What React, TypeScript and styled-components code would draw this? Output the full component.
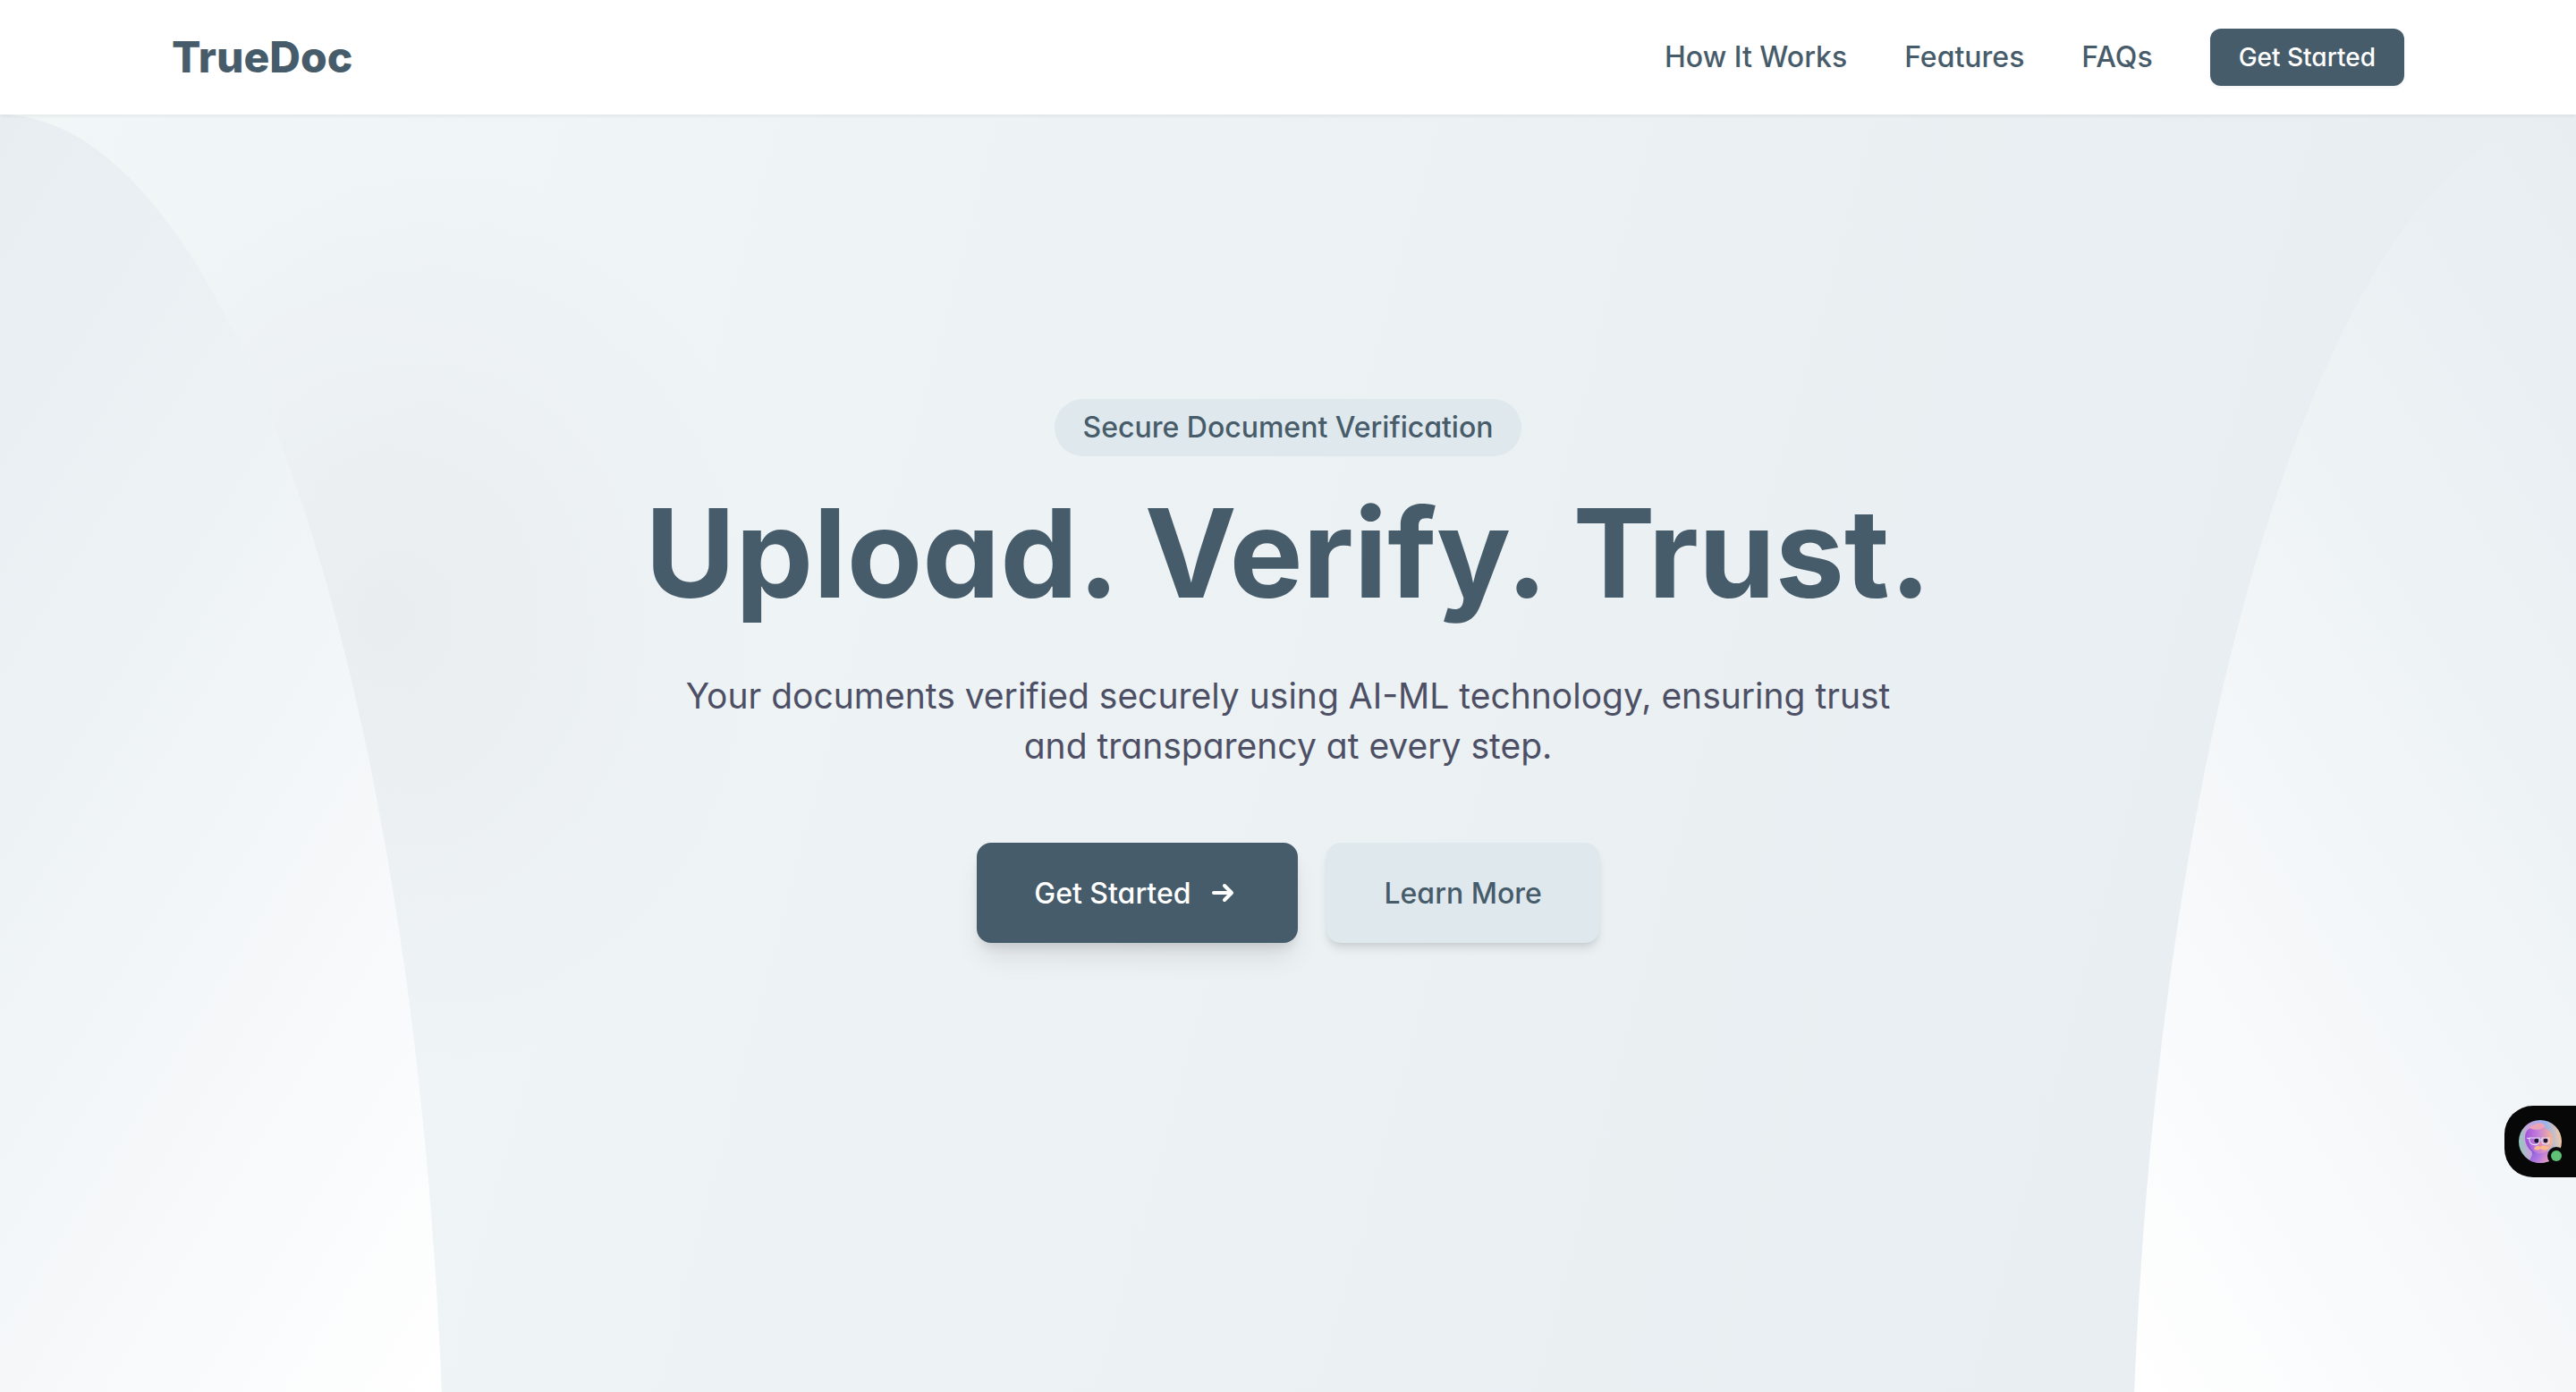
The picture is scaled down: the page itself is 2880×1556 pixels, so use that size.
import React from "react";
import styled, { createGlobalStyle } from "styled-components";

const GlobalStyle = createGlobalStyle`
  *, *::before, *::after { box-sizing: border-box; }
  body {
    margin: 0;
    color: #475c6a;
    font-family: Inter, "Liberation Sans", sans-serif;
    font-feature-settings: "cv11";
    -webkit-font-smoothing: antialiased;
  }
`;

const Page = styled.div`
  min-height: 100vh;
  display: flex;
  flex-direction: column;
`;

const Header = styled.header`
  position: relative;
  z-index: 2;
  display: flex;
  align-items: center;
  justify-content: space-between;
  height: 128px;
  padding: 0 192px;
  background: #fff;
  box-shadow: 0 2px 4px rgba(0, 0, 0, 0.06);
`;

const Logo = styled.a`
  color: inherit;
  font-size: 48px;
  font-weight: 800;
  line-height: 64px;
  text-decoration: none;
`;

const Nav = styled.nav`
  display: flex;
  align-items: center;
  gap: 64px;
`;

const NavLink = styled.a`
  color: inherit;
  font-size: 32px;
  font-weight: 500;
  line-height: 48px;
  text-decoration: none;
`;

const Button = styled.button<{ $tone?: "solid" | "soft"; $size?: "small" | "large" }>`
  display: inline-flex;
  align-items: center;
  justify-content: center;
  gap: 24px;
  height: ${(p) => (p.$size === "small" ? 64 : 112)}px;
  padding: 0 ${(p) => (p.$size === "small" ? 32 : 64)}px;
  border: 0;
  border-radius: ${(p) => (p.$size === "small" ? 12 : 16)}px;
  background: ${(p) => (p.$tone === "soft" ? "#dfe8ed" : "#475c6a")};
  color: ${(p) => (p.$tone === "soft" ? "#475c6a" : "#fff")};
  font: inherit;
  font-feature-settings: inherit;
  font-size: ${(p) => (p.$size === "small" ? 28 : 32)}px;
  font-weight: 500;
  box-shadow: ${(p) =>
    p.$size === "small"
      ? "0 2px 4px rgba(0, 0, 0, 0.05)"
      : p.$tone === "soft"
        ? "0 8px 12px -2px rgba(0, 0, 0, 0.1), 0 4px 8px -4px rgba(0, 0, 0, 0.1)"
        : "0 20px 30px -6px rgba(0, 0, 0, 0.1), 0 8px 12px -4px rgba(0, 0, 0, 0.1)"};
  cursor: pointer;
`;

const Hero = styled.main`
  position: relative;
  flex: 1;
  display: flex;
  flex-direction: column;
  align-items: center;
  padding: 318px 32px 0;
  overflow: hidden;
  background: linear-gradient(105deg, #f1f6f7 0%, #ecf1f4 50%, #e8eef1 80%, #e7edf1 100%);
`;

const Glow = styled.div`
  position: absolute;
  top: 40px;
  left: 0;
  width: 860px;
  height: 1040px;
  background: radial-gradient(closest-side, rgba(222, 224, 228, 0.36), rgba(222, 224, 228, 0));
`;

const Curve = styled.div<{ $side: "left" | "right" }>`
  position: absolute;
  top: 0;
  bottom: 0;
  ${(p) => p.$side}: 0;
  width: 498px;
  background: linear-gradient(
    ${(p) => (p.$side === "left" ? 122 : 238)}deg,
    #e7edf1,
    #edf2f5 35%,
    #f2f6f8 55%,
    #f6f8f9 67%,
    #fafbfc 82%,
    #fff
  );
  clip-path: ellipse(498px 1640px at ${(p) => (p.$side === "left" ? "0" : "100%")} 1640px);
`;

const Content = styled.div`
  position: relative;
  display: flex;
  flex-direction: column;
  align-items: center;
  text-align: center;
`;

const Badge = styled.p`
  margin: 0;
  padding: 8px 32px;
  border-radius: 32px;
  background: #dfe8ed;
  font-size: 32px;
  font-weight: 500;
  line-height: 48px;
`;

const Title = styled.h1`
  margin: 28px 0 52px;
  font-size: 138px;
  font-weight: 700;
  line-height: 160px;
`;

const Lead = styled.p`
  max-width: 1400px;
  margin: 0 0 80px;
  color: #4d5065;
  font-size: 39px;
  line-height: 56px;
`;

const Actions = styled.div`
  display: flex;
  gap: 32px;
`;

const ChatTab = styled.button`
  position: fixed;
  right: 0;
  bottom: 240px;
  z-index: 3;
  width: 80px;
  height: 80px;
  padding: 16px;
  border: 0;
  border-radius: 32px 0 0 32px;
  background: #070708;
  cursor: pointer;
`;

const AvatarArt = styled.svg`
  display: block;
`;

const ArrowIcon = () => (
  <svg width="32" height="32" viewBox="0 0 32 32" fill="none" stroke="currentColor" strokeWidth="4" strokeLinecap="round" strokeLinejoin="round" aria-hidden="true">
    <path d="M2 16H22M14 8l8 8-8 8" />
  </svg>
);

const Avatar = () => (
  <AvatarArt width="52" height="52" viewBox="0 0 52 52" aria-hidden="true">
    <defs>
      <linearGradient id="sky" x1="0" y1="0.6" x2="1" y2="0.5">
        <stop offset="0" stopColor="#8fcdbb" />
        <stop offset="0.25" stopColor="#c9a3dc" />
        <stop offset="0.65" stopColor="#93b3ee" />
        <stop offset="1" stopColor="#f3c9a6" />
      </linearGradient>
      <linearGradient id="skin" x1="0" y1="0.3" x2="1" y2="0.3">
        <stop offset="0" stopColor="#a552dc" />
        <stop offset="0.5" stopColor="#c583da" />
        <stop offset="1" stopColor="#fbb78d" />
      </linearGradient>
      <linearGradient id="neck" x1="0" y1="0" x2="1" y2="0.4">
        <stop offset="0" stopColor="#6f52dc" />
        <stop offset="0.6" stopColor="#b87be0" />
        <stop offset="1" stopColor="#e8a0b8" />
      </linearGradient>
      <clipPath id="round"><circle cx="24" cy="24" r="24" /></clipPath>
    </defs>
    <g clipPath="url(#round)">
      <rect width="48" height="48" fill="url(#sky)" />
      <path d="M14 30h18l1 8 6 10H11l4-9z" fill="url(#neck)" />
      <path d="M7 20C7 11 13 7 20 8c9-2 18 4 18 14 0 8-5 14-13 15C15 39 7 30 7 20z" fill="url(#skin)" />
      <path d="M12 9c1-3 4-3 6-4 4-3 10-2 12 2-4 4-12 5-18 2z" fill="#eda4b8" />
      <path d="M10 22c1 10 6 13 10 15-7-1-11-7-10-15z" fill="#6a4bdd" opacity=".7" />
      <path d="M17 32c2-4 5-4 7-2 3-3 7-1 10 1-4 4-8 2-10 1-2 2-5 2-7 0z" fill="#fbb98b" />
      <circle cx="20" cy="23" r="2.6" fill="#1d1430" />
      <circle cx="30" cy="23" r="2.4" fill="#1d1430" />
      <circle cx="24.5" cy="27" r="2" fill="#ee8ba4" />
      <g fill="none" stroke="#dfe2f5" strokeWidth="1.1">
        <path d="M9 20l3 1M23 22h3M12 20h11v4c0 5-10 5-11-1zM26 20h8v4c0 4-8 4-8 0z" />
      </g>
    </g>
    <circle cx="42" cy="40" r="10" fill="#070708" />
    <circle cx="42" cy="40" r="6" fill="#5fc077" />
  </AvatarArt>
);

export default function App() {
  return (
    <Page>
      <GlobalStyle />
      <Header>
        <Logo href="#">TrueDoc</Logo>
        <Nav aria-label="Main">
          <NavLink href="#how">How It Works</NavLink>
          <NavLink href="#features">Features</NavLink>
          <NavLink href="#faqs">FAQs</NavLink>
          <Button type="button" $size="small">Get Started</Button>
        </Nav>
      </Header>
      <Hero>
        <Glow />
        <Curve $side="left" />
        <Curve $side="right" />
        <Content>
          <Badge>Secure Document Verification</Badge>
          <Title>Upload. Verify. Trust.</Title>
          <Lead>Your documents verified securely using AI-ML technology, ensuring trust and transparency at every step.</Lead>
          <Actions>
            <Button type="button">Get Started<ArrowIcon /></Button>
            <Button type="button" $tone="soft">Learn More</Button>
          </Actions>
        </Content>
      </Hero>
      <ChatTab type="button" aria-label="Open chat">
        <Avatar />
      </ChatTab>
    </Page>
  );
}
